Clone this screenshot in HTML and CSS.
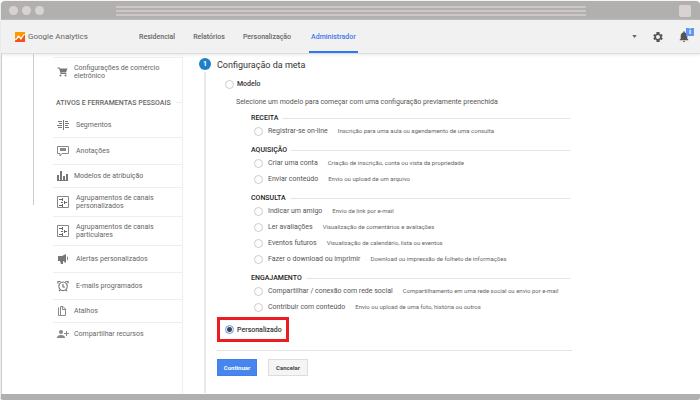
FILE: index.html
```html
<!DOCTYPE html>
<html lang="pt-BR">
<head>
    <meta charset="UTF-8">
    <meta name="viewport" content="width=device-width, initial-scale=1.0">
    <title>Google Analytics</title>
    <link rel="stylesheet" href="styles.css">
</head>
<body>
    <div class="window">
        <div class="titlebar">
            <span class="dot"></span>
            <span class="dot"></span>
            <span class="dot"></span>
            <span class="stripes"></span>
            <span class="square"></span>
        </div>
        <header class="header">
            <a class="logo" href="#">
                <svg width="10" height="10" viewBox="0 0 20 20">
                    <path fill="#ff9800" d="M0 0h20v20H0z"/>
                    <path fill="#f4511e" d="M0 17l6-6 5 4 9-10v15H0z"/>
                    <path fill="none" stroke="#fff" stroke-width="2.4" d="M1 16l6-7 5 4 7-9"/>
                    <circle cx="7" cy="9" r="2" fill="#fff"/>
                    <circle cx="12" cy="13" r="2" fill="#fff"/>
                </svg>
                <span>Google Analytics</span>
            </a>
            <nav class="tabs">
                <a href="#">Residencial</a>
                <a href="#">Relatórios</a>
                <a href="#">Personalização</a>
                <a href="#" class="active">Administrador</a>
            </nav>
            <div class="tools">
                <button type="button" aria-label="Contas">
                    <svg width="5" height="3" viewBox="0 0 6 4"><path fill="#666" d="M0 0h6L3 4z"/></svg>
                </button>
                <button type="button" aria-label="Configurações">
                    <svg width="10" height="10" viewBox="2 2 20 20"><path fill="#555" fill-rule="evenodd" d="M19.4 13c.1-.7.1-1.300 0-2l2.100-1.600-2-3.500-2.500 1a7 7 0 0 0-1.700-1L15 2.200h-6l-.4 3.700a7 7 0 0 0-1.700 1l-2.400-1-2 3.500L4.600 11v2l-2.100 1.600 2 3.500 2.500-1a7 7 0 0 0 1.700 1l.4 3.700h6l.4-3.700a7 7 0 0 0 1.700-1l2.400 1 2-3.500zM12 16a4 4 0 1 1 0-8 4 4 0 0 1 0 8z"/></svg>
                </button>
                <button type="button" class="bell" aria-label="Notificações">
                    <svg width="10" height="11" viewBox="4 2 16 20"><path fill="#555" d="M12 22a2 2 0 0 0 2-2h-4a2 2 0 0 0 2 2zm6-6v-5c0-3.100-1.600-5.600-4.500-6.300V4a1.500 1.500 0 0 0-3 0v.7C7.600 5.400 6 7.900 6 11v5l-2 2v1h16v-1z"/></svg>
                    <span class="badge">i</span>
                </button>
            </div>
        </header>
        <div class="page">
            <aside class="sidebar">
                <div class="tree"></div>
                <nav class="menu">
                    <a href="#" class="narrow tall first">
                        <svg width="12" height="12" viewBox="0 0 24 24"><path fill="#777" d="M7 17a2 2 0 1 0 0 4 2 2 0 0 0 0-4zm10 0a2 2 0 1 0 0 4 2 2 0 0 0 0-4zM1 3v2h3l3 9v2h12v-2H9v-1h9l3-8H6L5 3z"/></svg>
                        <span>Configurações de comércio eletrônico</span>
                    </a>
                    <h2>ATIVOS E FERRAMENTAS PESSOAIS</h2>
                    <a href="#">
                        <svg width="12" height="12" viewBox="0 0 12 12"><path stroke="#777" d="M1 2.500h4M2 4.500h3M0 6.500h5M1 8.500h4M6.500 1v10M8 2.500h3M8 4.500h4M8 6.500h3M8 8.500h4"/></svg>
                        <span>Segmentos</span>
                    </a>
                    <a href="#" class="medium">
                        <svg width="12" height="12" viewBox="0 0 12 12"><path fill="none" stroke="#888" d="M.5 1.500h11v7H5L3 11V8.500H.5zM3 3.500h6M3 4.500h6M3 5.500h6"/></svg>
                        <span>Anotações</span>
                    </a>
                    <a href="#" class="narrow">
                        <svg width="12" height="12" viewBox="0 0 12 12"><path fill="#777" d="M0 5h2v5H0zM3 1h2v9H3zM6 6h2v4H6zM9 4h2v6H9zM0 10h11v1H0z"/></svg>
                        <span>Modelos de atribuição</span>
                    </a>
                    <a href="#" class="tall">
                        <svg width="12" height="12" viewBox="0 0 12 12"><path fill="none" stroke="#888" d="M.5.5h11v11H.5z"/><path stroke="#666" d="M2 3.500h4M5.500 2v3M4 6.500h2M7 6.500h3M7.500 5v3M2 9.500h4M5.500 8v3"/></svg>
                        <span>Agrupamentos de canais personalizados</span>
                    </a>
                    <a href="#" class="tall">
                        <svg width="12" height="12" viewBox="0 0 12 12"><path fill="none" stroke="#888" d="M.5.5h11v11H.5z"/><path stroke="#666" d="M2 3.500h4M5.500 2v3M4 6.500h2M7 6.500h3M7.500 5v3M2 9.500h4M5.500 8v3"/></svg>
                        <span>Agrupamentos de canais particulares</span>
                    </a>
                    <a href="#" class="medium">
                        <svg width="12" height="12" viewBox="0 0 12 12"><path fill="#777" d="M1 3h4l4-2v9L6 8v3H4L3 8H1zM10 3q2 2 0 5z"/></svg>
                        <span>Alertas personalizados</span>
                    </a>
                    <a href="#" class="medium">
                        <svg width="12" height="12" viewBox="0 0 12 12"><path fill="none" stroke="#777" stroke-width="1.200" d="M6 2a4.300 4.300 0 1 0 .1 0zM6 4v3h2M1 3.500V1.500h2.500M11 3.500V1.500H8.500M2 11l1.500-1.500M10 11L8.500 9.500"/></svg>
                        <span>E-mails programados</span>
                    </a>
                    <a href="#" class="narrow">
                        <svg width="12" height="12" viewBox="0 0 12 12"><path fill="none" stroke="#888" d="M3.500 1.500H6L8.500 4v6.500h-5zM5.500 1.500v3h3M1.500 2.500v8h2"/></svg>
                        <span>Atalhos</span>
                    </a>
                    <a href="#" class="narrow">
                        <svg width="12" height="12" viewBox="0 0 12 12"><circle cx="4" cy="4" r="2" fill="#888"/><path fill="#888" d="M0 10q0-3 4-3t4 3zM9 3h1v2h2v1h-2v2H9V6H7V5h2z"/></svg>
                        <span>Compartilhar recursos</span>
                    </a>
                </nav>
            </aside>
            <main class="main">
                <div class="step">
                    <span class="number">1</span>
                    <span class="line"></span>
                </div>
                <form class="goal">
                    <h1>Configuração da meta</h1>
                    <label class="choice"><input type="radio" name="tipo"> Modelo</label>
                    <p>Selecione um modelo para começar com uma configuração previamente preenchida</p>
                    <div class="groups">
                        <section>
                            <h3>RECEITA</h3>
                            <label><input type="radio" name="modelo"> Registrar-se on-line <small>Inscrição para uma aula ou agendamento de uma consulta</small></label>
                        </section>
                        <section>
                            <h3>AQUISIÇÃO</h3>
                            <label><input type="radio" name="modelo"> Criar uma conta <small>Criação de inscrição, conta ou vista da propriedade</small></label>
                            <label><input type="radio" name="modelo"> Enviar conteúdo <small>Envio ou upload de um arquivo</small></label>
                        </section>
                        <section>
                            <h3>CONSULTA</h3>
                            <label><input type="radio" name="modelo"> Indicar um amigo <small>Envio de link por e-mail</small></label>
                            <label><input type="radio" name="modelo"> Ler avaliações <small>Visualização de comentários e avaliações</small></label>
                            <label><input type="radio" name="modelo"> Eventos futuros <small>Visualização de calendário, lista ou eventos</small></label>
                            <label><input type="radio" name="modelo"> Fazer o download ou imprimir <small>Download ou impressão de folheto de informações</small></label>
                        </section>
                        <section>
                            <h3>ENGAJAMENTO</h3>
                            <label><input type="radio" name="modelo"> Compartilhar / conexão com rede social <small>Compartilhamento em uma rede social ou envio por e-mail</small></label>
                            <label><input type="radio" name="modelo"> Contribuir com conteúdo <small>Envio ou upload de uma foto, história ou outros</small></label>
                        </section>
                    </div>
                    <label class="choice highlight"><input type="radio" name="tipo" checked> Personalizado</label>
                    <div class="actions">
                        <button type="button" class="primary">Continuar</button>
                        <button type="button">Cancelar</button>
                    </div>
                </form>
            </main>
        </div>
    </div>
</body>
</html>
```
FILE: styles.css
```css
* {
    box-sizing: border-box;
}
body {
    margin: 0;
    background: #fff;
    font-family: Roboto, "Liberation Sans", sans-serif;
    font-size: 7px;
    line-height: 8px;
    color: #555;
}
a {
    color: inherit;
    text-decoration: none;
}
button {
    font: inherit;
    cursor: pointer;
}
h1, h2, h3, p {
    margin: 0;
}
svg {
    flex: none;
    display: block;
}
.window {
    display: flex;
    flex-direction: column;
    min-height: 100vh;
    border-top: 1px solid #f4f4f4;
    border-left: 1px solid #eee;
    border-bottom: 6px solid #b2b0ae;
    border-radius: 5px 5px 3px 3px;
}

/* window frame */
.titlebar {
    display: flex;
    align-items: center;
    gap: 4px;
    height: 19px;
    padding: 0 9px 0 8px;
    background: #b2b0ae;
    border-radius: 4px 4px 0 0;
}
.dot {
    width: 9px;
    height: 9px;
    border-radius: 50%;
    background: #d9d2d2;
}
.stripes {
    flex: 1;
    height: 10px;
    margin: 0 89px 0 68px;
    background: repeating-linear-gradient(#cdc7c7 0 2px, #b2b0ae 2px 4px);
}
.square {
    width: 12px;
    height: 12px;
    border-radius: 2px;
    background: #d9d2d2;
}

/* top navigation */
.header {
    display: flex;
    height: 34px;
    padding: 0 6px 0 14px;
    background: #f1f1f1;
    border-bottom: 1px solid #ddd;
    box-shadow: 0 1px 3px #e8e8e8;
}
.logo {
    display: flex;
    align-items: center;
    gap: 3px;
    width: 124px;
    font-size: 8px;
    color: #666;
}
.tabs {
    display: flex;
    gap: 17px;
}
.tabs a {
    display: flex;
    align-items: center;
    padding: 2px 1px 0 0;
    border-bottom: 2px solid transparent;
    color: #666;
    font-weight: 500;
}
.tabs .active {
    padding: 2px 2px 0;
    color: #3f76e8;
    border-color: #3275f0;
}
.tools {
    display: flex;
    align-items: center;
    gap: 16px;
    margin-left: auto;
}
.tools button {
    padding: 0;
    border: 0;
    background: none;
}
.bell {
    position: relative;
    width: 15px;
}
.badge {
    position: absolute;
    top: -3px;
    right: 0;
    width: 8px;
    height: 8px;
    background: #5e97f6;
    color: #fff;
    font-weight: bold;
}

.page {
    display: flex;
    flex: 1;
    border-left: 1px solid #ccc;
}

/* sidebar */
.sidebar {
    display: flex;
    gap: 19px;
    width: 181px;
    border-right: 1px solid #eee;
}
.tree {
    width: 32px;
    height: 151px;
    border-right: 1px solid #ccc;
}
.menu {
    flex: 1;
    padding-top: 3px;
    color: #666;
}
.menu a {
    display: flex;
    align-items: center;
    gap: 7px;
    height: 24px;
    padding-left: 4px;
    border-top: 1px solid #eee;
}
.menu .narrow {
    gap: 5px;
    height: 23px;
}
.menu .medium {
    height: 27px;
}
.menu .tall {
    height: 29px;
}
.menu h2 {
    display: flex;
    align-items: center;
    gap: 5px;
    height: 27px;
    padding: 6px 0 0 3px;
    font-size: 7px;
    font-weight: 500;
    white-space: nowrap;
}
.menu h2::after {
    content: "";
    flex: 1;
    border-top: 1px solid #eee;
}
.menu h2 + a {
    border-top: 0;
}

/* goal setup */
.main {
    display: flex;
    flex: 1;
    gap: 6px;
    padding: 4px 16px 1px;
}
.step {
    display: flex;
    flex-direction: column;
    align-items: center;
    width: 12px;
}
.number {
    width: 12px;
    height: 12px;
    border-radius: 50%;
    background: #1e7fc8;
    color: #fff;
    font-weight: bold;
    line-height: 12px;
    text-align: center;
}
.line {
    flex: 1;
    width: 2px;
    margin-top: 2px;
    background: #eaeaea;
}
.goal {
    flex: 1;
    max-width: 355px;
}
.goal h1 {
    font-size: 9px;
    font-weight: normal;
    line-height: 14px;
    color: #333;
}
.goal input {
    appearance: none;
    flex: none;
    width: 9px;
    height: 9px;
    margin: 0;
    border: 1px solid #ccc;
    border-radius: 50%;
    background: #fff;
}
.goal input:checked {
    border-color: #6a9cf0;
    background: radial-gradient(#444 0 2px, #e6effd 3px);
}
.goal label {
    display: flex;
    align-items: center;
    gap: 5px;
    height: 16px;
}
.goal .choice {
    gap: 3px;
    margin: 4px 0 0 8px;
    color: #333;
    font-weight: 500;
}
.goal p {
    margin: 6px 0 7px 19px;
}
.groups {
    padding: 0 2px 0 34px;
}
.groups section {
    margin-bottom: 6px;
}
.groups h3 {
    display: flex;
    align-items: center;
    gap: 4px;
    height: 10px;
    font-size: 7px;
    font-weight: 500;
    color: #222;
}
.groups h3::after {
    content: "";
    flex: 1;
    border-top: 1px solid #e4e4e4;
}
.groups label {
    padding-left: 3px;
}
.groups small {
    margin-left: 5px;
    font-size: 6px;
    color: #666;
}
.goal .highlight {
    width: 72px;
    height: 25px;
    margin: -4px 0 8px;
    padding-left: 5px;
    border: 3px solid #ec1c24;
}
.actions {
    display: flex;
    gap: 11px;
    padding-top: 8px;
    border-top: 1px solid #e4e4e4;
}
.actions button {
    min-width: 40px;
    height: 17px;
    padding: 0;
    border: 1px solid #ddd;
    background: #f5f5f5;
    color: #444;
    font-size: 6px;
    font-weight: bold;
}
.actions .primary {
    border-color: #3f7fee;
    background: #4787ed;
    color: #fff;
}
```
